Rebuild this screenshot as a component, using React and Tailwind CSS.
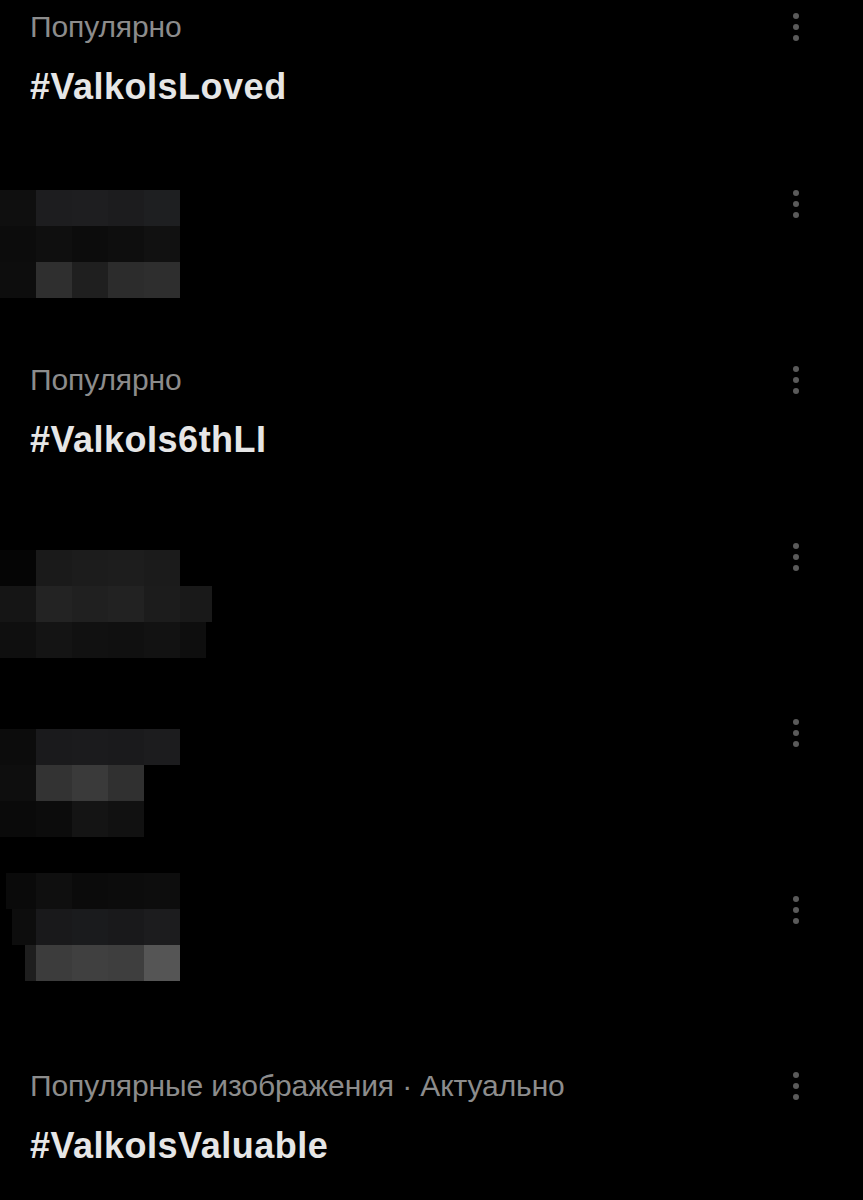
import React from "react";

const LABEL = { fontFamily: '"Liberation Sans", "Noto Sans", sans-serif' };

function Dots() {
  return (
    <div className="flex flex-col gap-[5px] pt-[13px] mr-[64px] w-[6px] shrink-0">
      <span className="block w-[6px] h-[6px] rounded-full bg-[#5a5a5a]" />
      <span className="block w-[6px] h-[6px] rounded-full bg-[#5a5a5a]" />
      <span className="block w-[6px] h-[6px] rounded-full bg-[#5a5a5a]" />
    </div>
  );
}

function Trend({ label, title, last }) {
  return (
    <div className={last ? "flex h-[141px]" : "flex h-[176.5px]"}>
      <div className="flex-1 pl-[30px] pt-[10px]">
        <div
          className="text-[30px] leading-[34px] text-[#8c8c8c] tracking-[-0.1px]"
          style={LABEL}
        >
          {label}
        </div>
        <div
          className="mt-[22px] text-[36px] leading-[42px] font-bold text-[#e6e6e6] tracking-[0.5px]"
          style={LABEL}
        >
          {title}
        </div>
      </div>
      <Dots />
    </div>
  );
}

function Block({ rows, pt }) {
  return (
    <div className={pt}>
      {rows.map((r, i) => (
        <div key={i} className="flex h-[36px]">
          {r.map(([w, c], j) => (
            <div key={j} className={`${w} h-[36px] ${c}`} />
          ))}
        </div>
      ))}
    </div>
  );
}

const b1 = [
  [["w-[36px]", "bg-[#0f0f0f]"], ["w-[36px]", "bg-[#1d1d1f]"], ["w-[36px]", "bg-[#1e1e20]"], ["w-[36px]", "bg-[#1c1c1e]"], ["w-[36px]", "bg-[#1e1f21]"]],
  [["w-[36px]", "bg-[#0c0c0c]"], ["w-[36px]", "bg-[#0f0f0f]"], ["w-[36px]", "bg-[#0c0c0c]"], ["w-[36px]", "bg-[#0e0e0e]"], ["w-[36px]", "bg-[#111111]"]],
  [["w-[36px]", "bg-[#0d0d0d]"], ["w-[36px]", "bg-[#2f2f2f]"], ["w-[36px]", "bg-[#1f1f1f]"], ["w-[36px]", "bg-[#2c2c2c]"], ["w-[36px]", "bg-[#2e2e2e]"]],
];

const b2 = [
  [["w-[36px]", "bg-[#050505]"], ["w-[36px]", "bg-[#1a1a1a]"], ["w-[36px]", "bg-[#1c1c1c]"], ["w-[36px]", "bg-[#1d1d1d]"], ["w-[36px]", "bg-[#1b1b1b]"]],
  [["w-[36px]", "bg-[#151515]"], ["w-[36px]", "bg-[#232323]"], ["w-[36px]", "bg-[#202020]"], ["w-[36px]", "bg-[#222222]"], ["w-[36px]", "bg-[#1c1c1c]"], ["w-[32px]", "bg-[#191919]"]],
  [["w-[36px]", "bg-[#0f0f0f]"], ["w-[36px]", "bg-[#141414]"], ["w-[36px]", "bg-[#111111]"], ["w-[36px]", "bg-[#101010]"], ["w-[36px]", "bg-[#121212]"], ["w-[26px]", "bg-[#0e0e0e]"]],
];

const b3 = [
  [["w-[36px]", "bg-[#0c0c0c]"], ["w-[36px]", "bg-[#1a1a1c]"], ["w-[36px]", "bg-[#1b1b1d]"], ["w-[36px]", "bg-[#1a1a1c]"], ["w-[36px]", "bg-[#1c1c1e]"]],
  [["w-[36px]", "bg-[#0e0e0e]"], ["w-[36px]", "bg-[#333333]"], ["w-[36px]", "bg-[#3a3a3a]"], ["w-[36px]", "bg-[#303030]"]],
  [["w-[36px]", "bg-[#0a0a0a]"], ["w-[36px]", "bg-[#0c0c0c]"], ["w-[36px]", "bg-[#141414]"], ["w-[36px]", "bg-[#111111]"]],
];

const b4 = [
  [["w-[6px]", "bg-[#000000]"], ["w-[30px]", "bg-[#0a0a0a]"], ["w-[36px]", "bg-[#0f0f0f]"], ["w-[36px]", "bg-[#0b0b0b]"], ["w-[36px]", "bg-[#0c0c0c]"], ["w-[36px]", "bg-[#0d0d0d]"]],
  [["w-[12px]", "bg-[#000000]"], ["w-[24px]", "bg-[#0d0d0d]"], ["w-[36px]", "bg-[#19191b]"], ["w-[36px]", "bg-[#1a1b1d]"], ["w-[36px]", "bg-[#19191b]"], ["w-[36px]", "bg-[#1c1c1e]"]],
  [["w-[25px]", "bg-[#000000]"], ["w-[11px]", "bg-[#1e1e1e]"], ["w-[36px]", "bg-[#3c3c3c]"], ["w-[36px]", "bg-[#404040]"], ["w-[36px]", "bg-[#3e3e3e]"], ["w-[36px]", "bg-[#555555]"]],
];

function Redacted({ rows, pt, h }) {
  return (
    <div className={`flex ${h}`}>
      <div className="flex-1">
        <Block rows={rows} pt={pt} />
      </div>
      <Dots />
    </div>
  );
}

export default function App() {
  return (
    <div className="w-[863px] h-[1200px] bg-black overflow-hidden">
      <Trend label="Популярно" title="#ValkoIsLoved" />
      <Redacted rows={b1} pt="pt-[13.5px]" h="h-[176.5px]" />
      <Trend label="Популярно" title="#ValkoIs6thLI" />
      <Redacted rows={b2} pt="pt-[20.5px]" h="h-[176.5px]" />
      <Redacted rows={b3} pt="pt-[23px]" h="h-[176.5px]" />
      <div className="flex h-[176.5px]">
        <div className="flex-1">
          <Block rows={b4} pt="-mt-[9.5px]" />
        </div>
        <Dots />
      </div>
      <Trend label="Популярные изображения · Актуально" title="#ValkoIsValuable" last />
    </div>
  );
}
